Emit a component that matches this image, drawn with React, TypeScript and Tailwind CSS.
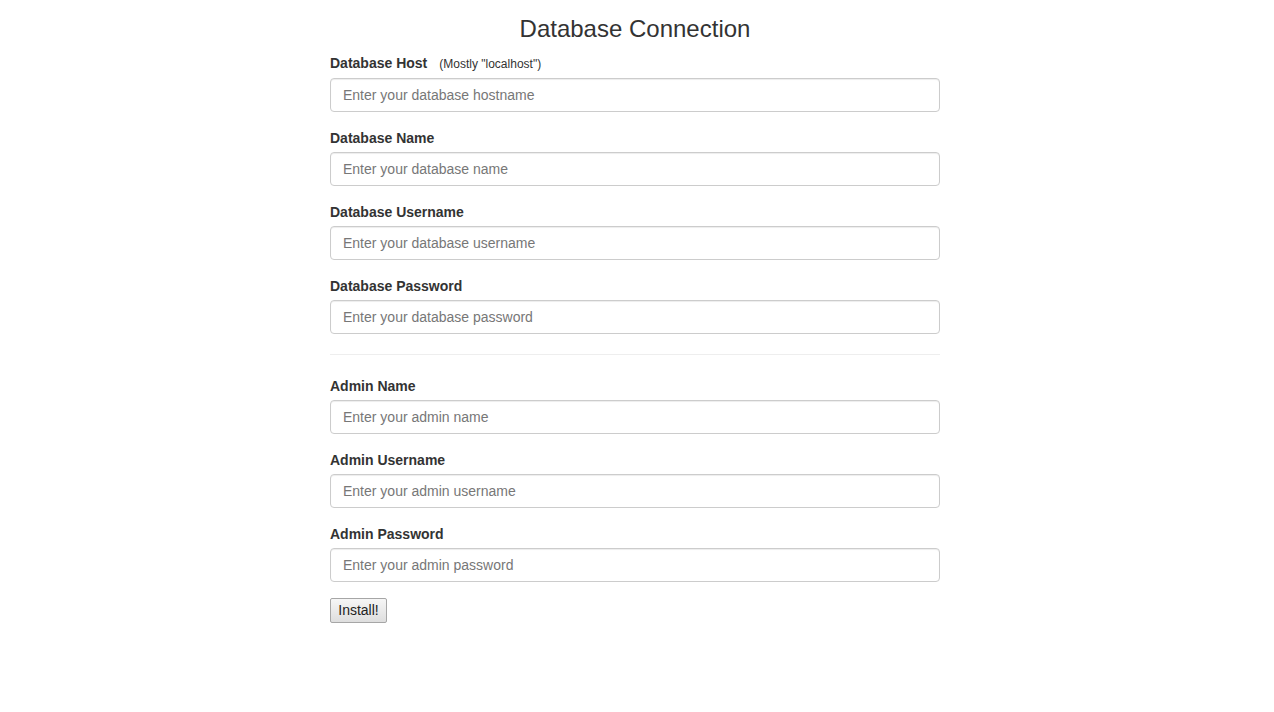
import React from "react";

const Field = ({ label, placeholder, type = "text", note }: { label: string; placeholder: string; type?: string; note?: string }) => (
  <div className="mb-[15px]">
    <label className="mb-[5px] block pt-[2px] text-[14px] font-bold leading-[18px] text-[#333]">
      {label}
      {note && <small className="ml-3 text-[12px] font-normal text-[#333]">{note}</small>}
    </label>
    <input
      type={type}
      placeholder={placeholder}
      className="block h-[34px] w-full rounded-[4px] border border-[#ccc] bg-white px-3 py-[6px] text-[14px] leading-[20px] text-[#555] shadow-[inset_0_1px_1px_rgba(0,0,0,0.075)] outline-none placeholder:text-[#777]"
    />
  </div>
);

export default function App() {
  return (
    <div className="min-h-[712px] w-[1270px] bg-white text-[14px] leading-[20px] text-[#333]" style={{ fontFamily: '"Liberation Sans", Arial, sans-serif' }}>
      <div className="mx-auto w-[610px] pt-[16px]">
        <h2 className="mb-[10px] text-center text-[24px] font-normal leading-[1.1] text-[#333]">Database Connection</h2>
        <form onSubmit={(e) => e.preventDefault()}>
          <Field label="Database Host" note={'(Mostly "localhost")'} placeholder="Enter your database hostname" />
          <Field label="Database Name" placeholder="Enter your database name" />
          <Field label="Database Username" placeholder="Enter your database username" />
          <Field label="Database Password" placeholder="Enter your database password" type="password" />
          <hr className="mt-[20px] mb-[20px] border-0 border-t border-[#eee]" />
          <Field label="Admin Name" placeholder="Enter your admin name" />
          <Field label="Admin Username" placeholder="Enter your admin username" />
          <Field label="Admin Password" placeholder="Enter your admin password" type="password" />
          <button
            type="submit"
            className="mt-px h-[25px] w-[57px] rounded-[2px] border border-[#a6a6a6] bg-gradient-to-b from-[#f6f6f6] to-[#dedede] px-0 text-center text-[14px] leading-[23px] text-[#222]"
          >
            Install!
          </button>
        </form>
      </div>
    </div>
  );
}
